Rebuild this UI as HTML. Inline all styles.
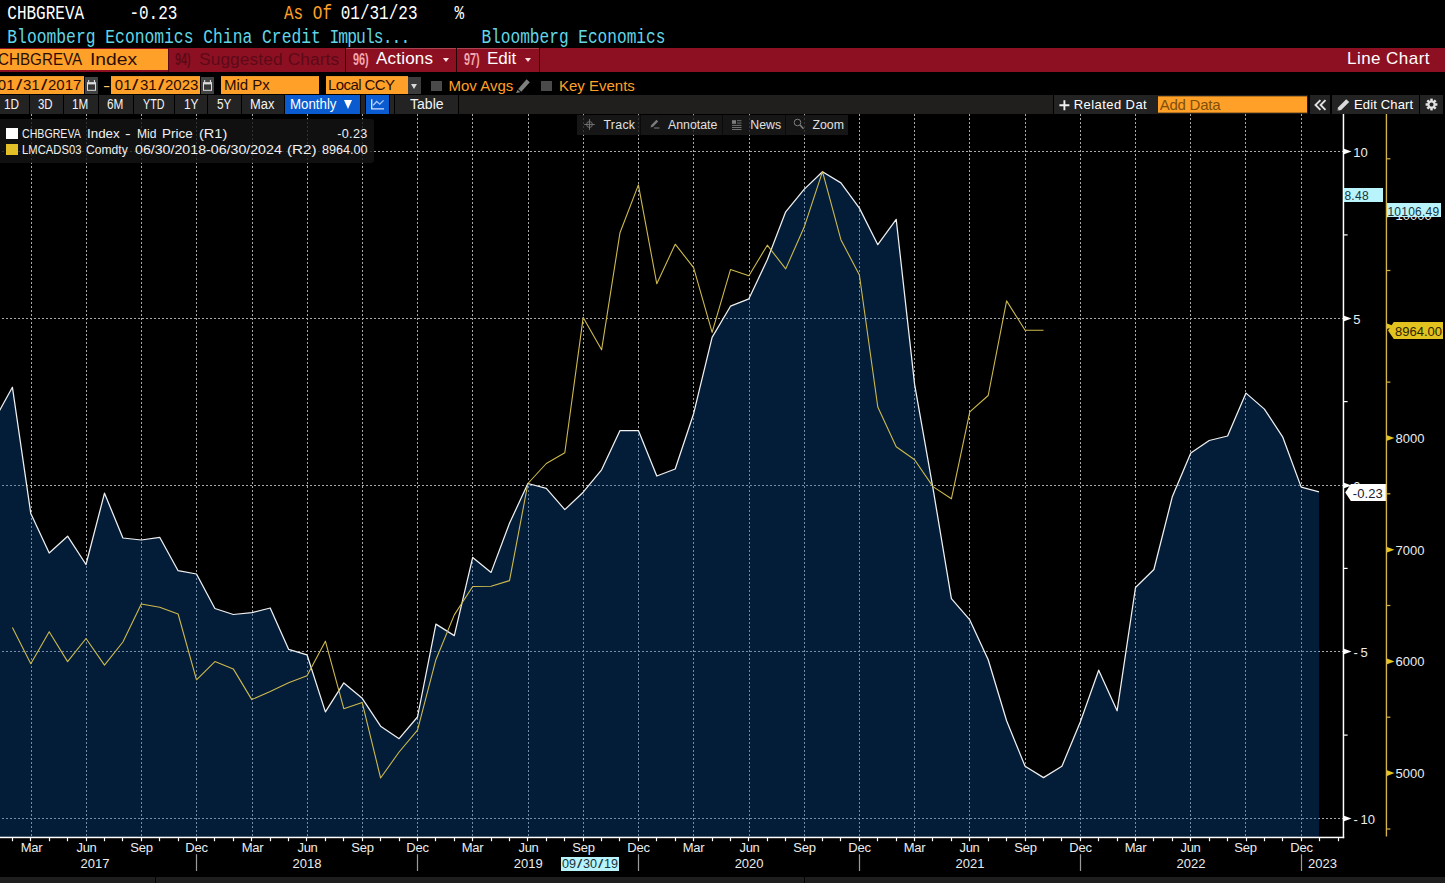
<!DOCTYPE html>
<html lang="en">
<head>
<meta charset="utf-8">
<title>CHBGREVA Index - Line Chart</title>
<style>
html,body{margin:0;padding:0;background:#000;}
body{width:1445px;height:883px;overflow:hidden;position:relative;font-family:"Liberation Sans","DejaVu Sans",sans-serif;color:#fff;}
.abs{position:absolute;white-space:nowrap;}
.mono{font-family:"Liberation Mono","DejaVu Sans Mono",monospace;font-size:16px;line-height:20px;transform-origin:0 0;transform:scaleY(1.3);}
.m2{font-size:16.33px;transform:scaleY(1.2);}
.ax{font-family:"Liberation Sans","DejaVu Sans",sans-serif;font-size:13px;fill:#ececec;}
.w{color:#fff}.o{color:#ffa028}.c{color:#62d6e6}
#redbar{left:0;top:47.8px;width:1445px;height:23.9px;background:#8d1022;}
.r3{font-size:17px;line-height:22px;top:48.2px;height:22px;}
.num{display:inline-block;transform-origin:0 50%;transform:scaleX(0.66);font-size:16.5px;margin-top:-0.3px;font-weight:bold}
.r4{font-size:15px;line-height:17px;top:77.3px;height:17px;}
.ob{top:76.2px;height:17.9px;line-height:18.6px;background:#ffa028;color:#2a0d06;box-shadow:inset 0 1px 0 #e8952a;}
.dt{font-size:15px}.dt i{font-style:normal;display:inline-block;width:8.4px;text-align:center;transform:scaleX(1.5)}
.dt2 i{font-style:normal;display:inline-block;width:7px;text-align:center;transform:scaleX(1.5)}
.tb{top:95px;height:19px;background:#232324;font-size:14px;line-height:19px;color:#f4f4f4;}
.tb span.sx{display:inline-block;transform-origin:0 0;}
.lw{font-size:12.6px;line-height:15px;color:#f0f0f0;transform-origin:0 0;}
.sep{top:95px;height:19px;width:1.2px;background:#000;}
</style>
</head>
<body>
<!-- Row 1 -->
<div class="abs mono w" id="t_sec" style="top:0.95px;left:7.3px">CHBGREVA</div>
<div class="abs mono w" id="t_val" style="top:0.95px;left:129.4px">-0.23</div>
<div class="abs mono o" id="t_asof" style="top:0.95px;left:284px">As Of</div>
<div class="abs mono w" id="t_date" style="top:0.95px;left:340.7px">01/31/23</div>
<div class="abs mono w" id="t_pct" style="top:0.95px;left:454.6px">%</div>
<!-- Row 2 -->
<div class="abs mono m2 c" id="t_desc" style="left:7.3px;top:26.1px">Bloomberg Economics China Credit <span style="letter-spacing:-0.93px;margin-left:-1.2px">Impuls...</span></div>
<div class="abs mono m2 c" id="t_src" style="left:481.4px;top:26.1px;font-size:16.15px">Bloomberg Economics</div>
<!-- Row 3 red bar -->
<div class="abs" id="redbar"></div>
<div class="abs r3" id="b_idx" style="left:0;top:49px;width:168px;background:#ffa028;color:#2a0d06;height:21px;line-height:21px;overflow:hidden"><span id="s_idx" style="position:absolute;left:-1.9px;top:0;transform-origin:0 0;transform:scaleX(0.895)">CHBGREVA</span><span id="s_idx2" style="position:absolute;left:89.9px;top:0;transform-origin:0 0;transform:scaleX(1.13)">Index</span></div>
<div class="abs r3" id="b_sug" style="left:169px;width:176px;color:#5c0a18"><span class="abs num" id="s_94" style="left:6.4px">94)</span><span class="abs" id="s_sug" style="left:30px;font-size:17.3px;letter-spacing:0.12px">Suggested Charts</span></div>
<div class="abs" style="left:168px;top:47.8px;width:1px;height:23.9px;background:#5a0914"></div>
<div class="abs" style="left:345px;top:47.8px;width:1.3px;height:23.9px;background:#240308"></div>
<div class="abs r3" id="b_act" style="left:346px;width:110px"><span class="abs num" id="s_96" style="left:7.2px;color:#f3a6ae">96)</span><span class="abs" id="s_act" style="left:30px;color:#fff;letter-spacing:0.2px">Actions</span><span class="abs tri" style="left:97.3px;top:9.9px;width:0;height:0;border-left:3.1px solid transparent;border-right:3.1px solid transparent;border-top:4.5px solid #ffe2e2"></span></div>
<div class="abs" style="left:456px;top:47.8px;width:1.3px;height:23.9px;background:#240308"></div>
<div class="abs r3" id="b_edit" style="left:457px;width:82px"><span class="abs num" id="s_97" style="left:7px;color:#f3a6ae">97)</span><span class="abs" id="s_edit" style="left:30px;color:#fff">Edit</span><span class="abs tri" style="left:68px;top:9.9px;width:0;height:0;border-left:3.1px solid transparent;border-right:3.1px solid transparent;border-top:4.5px solid #ffe2e2"></span></div>
<div class="abs" style="left:539px;top:47.8px;width:1.3px;height:23.9px;background:#240308"></div>
<div class="abs" style="left:346.3px;top:47.9px;width:109.7px;height:1px;background:rgba(255,200,200,0.28)"></div><div class="abs" style="left:457.3px;top:47.9px;width:81.7px;height:1px;background:rgba(255,200,200,0.28)"></div>
<div class="abs r3" id="s_lc" style="left:1347px;color:#fff;letter-spacing:0.45px">Line Chart</div>
<!-- Row 4 -->
<div class="abs r4 ob" id="f_d1" style="left:0;width:84px;background:#ffa028;color:#2a0d06;overflow:hidden"><span class="abs dt" id="s_d1" style="left:-2.2px">01<i>/</i>31<i>/</i>2017</span></div>
<div class="abs cal" style="left:85px;top:77px;width:13px;height:17.1px;background:#424444"><svg width="13" height="17" viewBox="0 0 13 17"><rect x="2.5" y="5.9" width="8" height="7.4" fill="#353535" stroke="#dcdcdc" stroke-width="1"/><rect x="2" y="5.3" width="9" height="2.1" fill="#dcdcdc"/><rect x="3.1" y="3" width="1.1" height="2.6" fill="#dcdcdc"/><rect x="8.9" y="3" width="1.1" height="2.6" fill="#dcdcdc"/></svg></div>
<div class="abs r4 o" style="left:102.5px;transform-origin:0 0;transform:scaleX(1.45);color:#ffc470">-</div>
<div class="abs r4 ob" id="f_d2" style="left:111px;width:89px;background:#ffa028;color:#2a0d06;overflow:hidden"><span class="abs dt" id="s_d2" style="left:3.8px">01<i>/</i>31<i>/</i>2023</span></div>
<div class="abs cal" style="left:201px;top:77px;width:13px;height:17.1px;background:#424444"><svg width="13" height="17" viewBox="0 0 13 17"><rect x="2.5" y="5.9" width="8" height="7.4" fill="#353535" stroke="#dcdcdc" stroke-width="1"/><rect x="2" y="5.3" width="9" height="2.1" fill="#dcdcdc"/><rect x="3.1" y="3" width="1.1" height="2.6" fill="#dcdcdc"/><rect x="8.9" y="3" width="1.1" height="2.6" fill="#dcdcdc"/></svg></div>
<div class="abs r4 ob" id="f_mid" style="left:221px;width:98px;background:#ffa028;color:#2a0d06"><span class="abs" id="s_mid" style="left:3px">Mid Px</span></div>
<div class="abs r4 ob" id="f_ccy" style="left:325.5px;width:82.5px;background:#ffa028;color:#2a0d06"><span class="abs" id="s_ccy" style="left:2.5px;letter-spacing:-0.6px">Local CCY</span></div>
<div class="abs" style="left:408px;top:77px;width:13px;height:17px;background:#3c3c3c"><span class="abs" style="left:3px;top:6.5px;width:0;height:0;border-left:3.5px solid transparent;border-right:3.5px solid transparent;border-top:5.5px solid #d8d8d8"></span></div>
<div class="abs" style="left:431px;top:80.5px;width:11px;height:10.5px;background:#4a4a4a"></div>
<div class="abs r4 o" id="s_mov" style="left:448.5px">Mov Avgs</div>
<svg class="abs" style="left:515px;top:78px" width="16" height="16" viewBox="0 0 16 16"><path d="M3.2,11.0 L11.6,1.3 L14.8,4.2 L6.3,13.8 Z" fill="#7f7f7f"/><path d="M1,15 L2.6,11.7 L5.4,14.2 Z" fill="#7f7f7f"/></svg>
<div class="abs" style="left:541.3px;top:80.5px;width:10.5px;height:10.5px;background:#4a4a4a"></div>
<div class="abs r4 o" id="s_key" style="left:559px">Key Events</div>
<!-- Row 5 toolbar -->
<div class="abs" style="left:0;top:95px;width:1445px;height:19px;background:#201f1e"></div>
<div class="abs tb" style="left:0;width:29px"><span class="abs sx" id="s_1d" style="left:3.96px;transform:scaleX(0.841)">1D</span></div>
<div class="abs tb" style="left:30px;width:33px"><span class="abs sx" id="s_3d" style="left:8.30px;transform:scaleX(0.817)">3D</span></div>
<div class="abs tb" style="left:64px;width:34px"><span class="abs sx" id="s_1m" style="left:8.17px;transform:scaleX(0.833)">1M</span></div>
<div class="abs tb" style="left:99px;width:34px"><span class="abs sx" id="s_6m" style="left:8.00px;transform:scaleX(0.842)">6M</span></div>
<div class="abs tb" style="left:134px;width:40px"><span class="abs sx" id="s_ytd" style="left:9.20px;transform:scaleX(0.764)">YTD</span></div>
<div class="abs tb" style="left:175px;width:32px"><span class="abs sx" id="s_1y" style="left:8.55px;transform:scaleX(0.850)">1Y</span></div>
<div class="abs tb" style="left:208px;width:33px"><span class="abs sx" id="s_5y" style="left:8.76px;transform:scaleX(0.838)">5Y</span></div>
<div class="abs tb" style="left:242px;width:42px"><span class="abs sx" id="s_max" style="left:8.08px;transform:scaleX(0.920)">Max</span></div>
<div class="abs tb" style="left:285px;width:75px;background:#0a5bd0;color:#fff"><span class="abs sx" id="s_mon" style="left:4.55px;transform:scaleX(0.948)">Monthly</span><span class="abs" style="left:59px;top:5px;width:0;height:0;border-left:4.6px solid transparent;border-right:4.6px solid transparent;border-top:9.2px solid #fff"></span></div>
<div class="abs tb" style="left:366px;width:23px;background:#0a5bd0"><svg width="23" height="19" viewBox="0 0 23 19" style="position:absolute;left:0;top:0"><path d="M5.7,4.3 V13.9 H18" fill="none" stroke="#cfe0ff" stroke-width="1.4"/><path d="M7.2,10.3 L10.7,6.5 L13.8,9.2 L17.6,5.4" fill="none" stroke="#a9c9ff" stroke-width="1.3"/></svg></div>
<div class="abs tb" style="left:395.2px;width:63px"><span class="abs sx" id="s_tab" style="left:15.2px;transform:scaleX(1.003)">Table</span></div>
<div class="abs tb" style="left:1054px;width:93px;overflow:hidden;color:#fff"><svg class="abs" style="left:4.5px;top:4.6px" width="11" height="11" viewBox="0 0 11 11"><path d="M5.4,0.3 V10.3 M0.4,5.3 H10.4" stroke="#f0f0f0" stroke-width="1.9" fill="none"/></svg><span class="abs" id="s_rel" style="left:19.8px;font-size:13px;letter-spacing:0.42px">Related Data</span></div>
<div class="abs" style="left:1147px;top:95px;width:11px;height:18.5px;background:#222"></div>
<div class="abs" id="f_add" style="left:1158px;top:95.5px;width:149px;height:17.4px;background:#ffa028;box-shadow:inset 0 1px 0 #b8741c, inset 0 -1px 0 #b8741c;color:#80500a;font-size:15px;line-height:17.4px"><span class="abs" id="s_add" style="left:1.7px;top:0px;letter-spacing:-0.25px">Add Data</span></div>
<div class="abs tb" style="left:1310px;width:20.4px"><svg class="abs" style="left:0;top:0" width="20" height="18" viewBox="0 0 20 18"><path d="M10.4,5.1 L5.5,10 L10.4,14.9 M15.5,5.1 L10.6,10 L15.5,14.9" fill="none" stroke="#e2e2e2" stroke-width="1.9" stroke-linejoin="miter"/></svg></div>
<div class="abs tb" style="left:1332px;width:87px;color:#fff"><svg class="abs" style="left:4px;top:2.5px" width="15" height="14" viewBox="0 0 15 14"><path d="M0.9,13 L2.3,9.3 L10.2,1.2 L13.2,4.0 L5.2,12.0 Z" fill="#dadada"/><path d="M0.9,13 L1.7,10.9 L3.2,12.3 Z" fill="#222"/></svg><span class="abs" id="s_ec" style="left:21.9px;font-size:13px;letter-spacing:0.17px">Edit Chart</span></div>
<div class="abs tb" style="left:1420px;width:23px"><svg class="abs" style="left:4.5px;top:3px" width="13" height="13" viewBox="-6.5 -6.5 13 13"><g fill="#e2e2e2"><rect x="-1.25" y="-5.9" width="2.5" height="3" transform="rotate(0)"/><rect x="-1.25" y="-5.9" width="2.5" height="3" transform="rotate(45)"/><rect x="-1.25" y="-5.9" width="2.5" height="3" transform="rotate(90)"/><rect x="-1.25" y="-5.9" width="2.5" height="3" transform="rotate(135)"/><rect x="-1.25" y="-5.9" width="2.5" height="3" transform="rotate(180)"/><rect x="-1.25" y="-5.9" width="2.5" height="3" transform="rotate(225)"/><rect x="-1.25" y="-5.9" width="2.5" height="3" transform="rotate(270)"/><rect x="-1.25" y="-5.9" width="2.5" height="3" transform="rotate(315)"/></g><circle r="3.05" fill="none" stroke="#e2e2e2" stroke-width="2.1"/></svg></div>
<div class="abs sep" style="left:28.5px"></div><div class="abs sep" style="left:62.5px"></div><div class="abs sep" style="left:97.5px"></div><div class="abs sep" style="left:132.5px"></div><div class="abs sep" style="left:173.5px"></div><div class="abs sep" style="left:206.5px"></div><div class="abs sep" style="left:240.5px"></div><div class="abs sep" style="left:283.5px"></div><div class="abs sep" style="left:360px;width:3.5px;background:#252523;border-left:1.5px solid #000;border-right:1px solid #000"></div><div class="abs sep" style="left:389px;width:4px;background:#252523;border-left:1px solid #000;border-right:1.2px solid #000"></div><div class="abs sep" style="left:458px"></div><div class="abs sep" style="left:1053px"></div><div class="abs sep" style="left:1308px;width:2px"></div><div class="abs sep" style="left:1330px;width:2px"></div><div class="abs sep" style="left:1419px"></div><div class="abs sep" style="left:1443px;width:2px"></div>
<svg id="chart" width="1445" height="883" viewBox="0 0 1445 883" style="position:absolute;left:0;top:0">
<defs><clipPath id="cp"><rect x="0" y="114" width="1343" height="724"/></clipPath></defs>
<g clip-path="url(#cp)">
<g stroke="#a9a9a9" stroke-width="1" stroke-dasharray="2 2" shape-rendering="crispEdges"><line x1="31.5" y1="114" x2="31.5" y2="837"/><line x1="86.5" y1="114" x2="86.5" y2="837"/><line x1="141.5" y1="114" x2="141.5" y2="837"/><line x1="196.5" y1="114" x2="196.5" y2="837"/><line x1="252.5" y1="114" x2="252.5" y2="837"/><line x1="307.5" y1="114" x2="307.5" y2="837"/><line x1="362.5" y1="114" x2="362.5" y2="837"/><line x1="417.5" y1="114" x2="417.5" y2="837"/><line x1="472.5" y1="114" x2="472.5" y2="837"/><line x1="528.5" y1="114" x2="528.5" y2="837"/><line x1="583.5" y1="114" x2="583.5" y2="837"/><line x1="638.5" y1="114" x2="638.5" y2="837"/><line x1="693.5" y1="114" x2="693.5" y2="837"/><line x1="749.5" y1="114" x2="749.5" y2="837"/><line x1="804.5" y1="114" x2="804.5" y2="837"/><line x1="859.5" y1="114" x2="859.5" y2="837"/><line x1="914.5" y1="114" x2="914.5" y2="837"/><line x1="969.5" y1="114" x2="969.5" y2="837"/><line x1="1025.5" y1="114" x2="1025.5" y2="837"/><line x1="1080.5" y1="114" x2="1080.5" y2="837"/><line x1="1135.5" y1="114" x2="1135.5" y2="837"/><line x1="1190.5" y1="114" x2="1190.5" y2="837"/><line x1="1245.5" y1="114" x2="1245.5" y2="837"/><line x1="1301.5" y1="114" x2="1301.5" y2="837"/><line x1="-2" y1="151.5" x2="1343" y2="151.5"/><line x1="-2" y1="318.5" x2="1343" y2="318.5"/><line x1="-2" y1="485.5" x2="1343" y2="485.5"/><line x1="-2" y1="651.5" x2="1343" y2="651.5"/><line x1="-2" y1="818.5" x2="1343" y2="818.5"/></g>
<path d="M-6.0,420.6 L12.4,387.2 L30.8,513.6 L49.2,553.0 L67.6,536.2 L86.0,564.5 L104.5,493.2 L122.9,538.0 L141.3,540.0 L159.7,537.3 L178.1,570.7 L196.5,574.0 L214.9,608.5 L233.3,614.5 L251.8,612.6 L270.2,608.0 L288.6,649.3 L307.0,654.8 L325.4,711.9 L343.8,682.9 L362.2,698.3 L380.6,726.2 L399.1,738.7 L417.5,717.0 L435.9,624.1 L454.3,635.6 L472.7,557.4 L491.1,572.4 L509.5,523.3 L527.9,483.5 L546.3,488.4 L564.8,509.6 L583.2,492.2 L601.6,469.8 L620.0,430.6 L638.4,430.6 L656.8,476.0 L675.2,469.0 L693.6,413.7 L712.1,337.4 L730.5,306.2 L748.9,298.8 L767.3,259.7 L785.7,211.8 L804.1,189.4 L822.5,171.7 L840.9,182.9 L859.4,208.1 L877.8,244.7 L896.2,219.3 L914.6,384.4 L933.0,488.4 L951.4,598.7 L969.8,619.9 L988.2,659.7 L1006.6,720.8 L1025.1,766.3 L1043.5,777.6 L1061.9,766.3 L1080.3,722.0 L1098.7,670.2 L1117.1,710.8 L1135.5,587.5 L1153.9,569.5 L1172.4,496.4 L1190.8,453.0 L1209.2,440.5 L1227.6,436.0 L1246.0,393.1 L1264.4,409.1 L1282.8,437.2 L1301.2,487.1 L1319.0,491.8 L1319.0,837.0 L-6.0,837.0 Z" fill="rgb(9,88,170)" fill-opacity="0.33"/>
<path d="M-6.0,420.6 L12.4,387.2 L30.8,513.6 L49.2,553.0 L67.6,536.2 L86.0,564.5 L104.5,493.2 L122.9,538.0 L141.3,540.0 L159.7,537.3 L178.1,570.7 L196.5,574.0 L214.9,608.5 L233.3,614.5 L251.8,612.6 L270.2,608.0 L288.6,649.3 L307.0,654.8 L325.4,711.9 L343.8,682.9 L362.2,698.3 L380.6,726.2 L399.1,738.7 L417.5,717.0 L435.9,624.1 L454.3,635.6 L472.7,557.4 L491.1,572.4 L509.5,523.3 L527.9,483.5 L546.3,488.4 L564.8,509.6 L583.2,492.2 L601.6,469.8 L620.0,430.6 L638.4,430.6 L656.8,476.0 L675.2,469.0 L693.6,413.7 L712.1,337.4 L730.5,306.2 L748.9,298.8 L767.3,259.7 L785.7,211.8 L804.1,189.4 L822.5,171.7 L840.9,182.9 L859.4,208.1 L877.8,244.7 L896.2,219.3 L914.6,384.4 L933.0,488.4 L951.4,598.7 L969.8,619.9 L988.2,659.7 L1006.6,720.8 L1025.1,766.3 L1043.5,777.6 L1061.9,766.3 L1080.3,722.0 L1098.7,670.2 L1117.1,710.8 L1135.5,587.5 L1153.9,569.5 L1172.4,496.4 L1190.8,453.0 L1209.2,440.5 L1227.6,436.0 L1246.0,393.1 L1264.4,409.1 L1282.8,437.2 L1301.2,487.1 L1319.0,491.8" fill="none" stroke="#f0f0f0" stroke-width="1.25" stroke-linejoin="round"/>
<path d="M12.4,627.6 L30.8,663.7 L49.2,631.7 L67.6,661.6 L86.0,638.5 L104.5,665.1 L122.9,642.0 L141.3,604.0 L159.7,607.2 L178.1,614.0 L196.5,679.8 L214.9,661.6 L233.3,668.9 L251.8,699.6 L270.2,691.5 L288.6,682.8 L307.0,675.7 L325.4,641.2 L343.8,708.7 L362.2,702.6 L380.6,778.0 L399.1,752.0 L417.5,730.2 L435.9,659.7 L454.3,614.9 L472.7,586.5 L491.1,586.3 L509.5,580.6 L527.9,483.5 L546.3,463.5 L564.8,452.8 L583.2,317.4 L601.6,349.8 L620.0,232.7 L638.4,184.9 L656.8,283.8 L675.2,244.2 L693.6,267.6 L712.1,332.4 L730.5,269.6 L748.9,275.8 L767.3,245.2 L785.7,268.9 L804.1,227.3 L822.5,171.7 L840.9,239.7 L859.4,275.0 L877.8,407.0 L896.2,446.8 L914.6,459.7 L933.0,486.6 L951.4,498.8 L969.8,411.9 L988.2,395.5 L1006.6,300.9 L1025.1,330.3 L1043.5,330.3" fill="none" stroke="#cdb94e" stroke-width="1.1" stroke-linejoin="round"/>
</g>
<g shape-rendering="crispEdges">
<rect x="1342.7" y="114" width="1.5" height="724.2" fill="#fff" shape-rendering="auto"/>
<rect x="0" y="836.7" width="1344.2" height="1.5" fill="#fff" shape-rendering="auto"/>
<rect x="1385.75" y="114" width="1.35" height="722.5" fill="#d6b44c" shape-rendering="auto"/>
</g>
<rect x="1344" y="234.3" width="3.6" height="1.2" fill="#fff"/>
<rect x="1344" y="401.0" width="3.6" height="1.2" fill="#fff"/>
<rect x="1344" y="567.8" width="3.6" height="1.2" fill="#fff"/>
<rect x="1344" y="734.5" width="3.6" height="1.2" fill="#fff"/>
<path d="M1344,148.7 L1351.6,151.5 L1344,154.3 Z" fill="#fff"/>
<text x="1353.2" y="156.5" class="ax">10</text>
<path d="M1344,315.7 L1351.6,318.5 L1344,321.3 Z" fill="#fff"/>
<text x="1353.2" y="323.5" class="ax">5</text>
<path d="M1344,482.7 L1351.6,485.5 L1344,488.3 Z" fill="#fff"/>
<text x="1353.2" y="490.5" class="ax">0</text>
<path d="M1344,648.7 L1351.6,651.5 L1344,654.3 Z" fill="#fff"/>
<text x="1353.6" y="656.5" class="ax">-<tspan dx="2.6">5</tspan></text>
<path d="M1344,815.7 L1351.6,818.5 L1344,821.3 Z" fill="#fff"/>
<text x="1353.6" y="823.5" class="ax">-<tspan dx="2.6">10</tspan></text>
<rect x="1387" y="158.2" width="3.4" height="1.2" fill="#d6b44c"/>
<rect x="1387" y="269.9" width="3.4" height="1.2" fill="#d6b44c"/>
<rect x="1387" y="381.5" width="3.4" height="1.2" fill="#d6b44c"/>
<rect x="1387" y="493.2" width="3.4" height="1.2" fill="#d6b44c"/>
<rect x="1387" y="604.9" width="3.4" height="1.2" fill="#d6b44c"/>
<rect x="1387" y="716.6" width="3.4" height="1.2" fill="#d6b44c"/>
<rect x="1387" y="828.4" width="3.4" height="1.2" fill="#d6b44c"/>
<path d="M1387,211.8 L1394.5,214.6 L1387,217.4 Z" fill="#e6c51f"/>
<text x="1395.6" y="219.6" class="ax">10000</text>
<path d="M1387,323.5 L1394.5,326.3 L1387,329.1 Z" fill="#e6c51f"/>
<text x="1395.6" y="331.3" class="ax">9000</text>
<path d="M1387,435.2 L1394.5,438.0 L1387,440.8 Z" fill="#e6c51f"/>
<text x="1395.6" y="443.0" class="ax">8000</text>
<path d="M1387,546.9 L1394.5,549.7 L1387,552.5 Z" fill="#e6c51f"/>
<text x="1395.6" y="554.7" class="ax">7000</text>
<path d="M1387,658.6 L1394.5,661.4 L1387,664.2 Z" fill="#e6c51f"/>
<text x="1395.6" y="666.4" class="ax">6000</text>
<path d="M1387,770.3 L1394.5,773.1 L1387,775.9 Z" fill="#e6c51f"/>
<text x="1395.6" y="778.1" class="ax">5000</text>
<rect x="11.9" y="838" width="1.2" height="3.2" fill="#fff"/>
<rect x="29.9" y="838" width="1.2" height="3.2" fill="#fff"/>
<rect x="48.9" y="838" width="1.2" height="3.2" fill="#fff"/>
<rect x="66.9" y="838" width="1.2" height="3.2" fill="#fff"/>
<rect x="85.9" y="838" width="1.2" height="3.2" fill="#fff"/>
<rect x="103.9" y="838" width="1.2" height="3.2" fill="#fff"/>
<rect x="121.9" y="838" width="1.2" height="3.2" fill="#fff"/>
<rect x="140.9" y="838" width="1.2" height="3.2" fill="#fff"/>
<rect x="158.9" y="838" width="1.2" height="3.2" fill="#fff"/>
<rect x="177.9" y="838" width="1.2" height="3.2" fill="#fff"/>
<rect x="195.9" y="838" width="1.2" height="3.2" fill="#fff"/>
<rect x="213.9" y="838" width="1.2" height="3.2" fill="#fff"/>
<rect x="232.9" y="838" width="1.2" height="3.2" fill="#fff"/>
<rect x="250.9" y="838" width="1.2" height="3.2" fill="#fff"/>
<rect x="269.9" y="838" width="1.2" height="3.2" fill="#fff"/>
<rect x="287.9" y="838" width="1.2" height="3.2" fill="#fff"/>
<rect x="305.9" y="838" width="1.2" height="3.2" fill="#fff"/>
<rect x="324.9" y="838" width="1.2" height="3.2" fill="#fff"/>
<rect x="342.9" y="838" width="1.2" height="3.2" fill="#fff"/>
<rect x="361.9" y="838" width="1.2" height="3.2" fill="#fff"/>
<rect x="379.9" y="838" width="1.2" height="3.2" fill="#fff"/>
<rect x="398.9" y="838" width="1.2" height="3.2" fill="#fff"/>
<rect x="416.9" y="838" width="1.2" height="3.2" fill="#fff"/>
<rect x="434.9" y="838" width="1.2" height="3.2" fill="#fff"/>
<rect x="453.9" y="838" width="1.2" height="3.2" fill="#fff"/>
<rect x="471.9" y="838" width="1.2" height="3.2" fill="#fff"/>
<rect x="490.9" y="838" width="1.2" height="3.2" fill="#fff"/>
<rect x="508.9" y="838" width="1.2" height="3.2" fill="#fff"/>
<rect x="526.9" y="838" width="1.2" height="3.2" fill="#fff"/>
<rect x="545.9" y="838" width="1.2" height="3.2" fill="#fff"/>
<rect x="563.9" y="838" width="1.2" height="3.2" fill="#fff"/>
<rect x="582.9" y="838" width="1.2" height="3.2" fill="#fff"/>
<rect x="600.9" y="838" width="1.2" height="3.2" fill="#fff"/>
<rect x="618.9" y="838" width="1.2" height="3.2" fill="#fff"/>
<rect x="637.9" y="838" width="1.2" height="3.2" fill="#fff"/>
<rect x="655.9" y="838" width="1.2" height="3.2" fill="#fff"/>
<rect x="674.9" y="838" width="1.2" height="3.2" fill="#fff"/>
<rect x="692.9" y="838" width="1.2" height="3.2" fill="#fff"/>
<rect x="711.9" y="838" width="1.2" height="3.2" fill="#fff"/>
<rect x="729.9" y="838" width="1.2" height="3.2" fill="#fff"/>
<rect x="747.9" y="838" width="1.2" height="3.2" fill="#fff"/>
<rect x="766.9" y="838" width="1.2" height="3.2" fill="#fff"/>
<rect x="784.9" y="838" width="1.2" height="3.2" fill="#fff"/>
<rect x="803.9" y="838" width="1.2" height="3.2" fill="#fff"/>
<rect x="821.9" y="838" width="1.2" height="3.2" fill="#fff"/>
<rect x="839.9" y="838" width="1.2" height="3.2" fill="#fff"/>
<rect x="858.9" y="838" width="1.2" height="3.2" fill="#fff"/>
<rect x="876.9" y="838" width="1.2" height="3.2" fill="#fff"/>
<rect x="895.9" y="838" width="1.2" height="3.2" fill="#fff"/>
<rect x="913.9" y="838" width="1.2" height="3.2" fill="#fff"/>
<rect x="931.9" y="838" width="1.2" height="3.2" fill="#fff"/>
<rect x="950.9" y="838" width="1.2" height="3.2" fill="#fff"/>
<rect x="968.9" y="838" width="1.2" height="3.2" fill="#fff"/>
<rect x="987.9" y="838" width="1.2" height="3.2" fill="#fff"/>
<rect x="1005.9" y="838" width="1.2" height="3.2" fill="#fff"/>
<rect x="1024.9" y="838" width="1.2" height="3.2" fill="#fff"/>
<rect x="1042.9" y="838" width="1.2" height="3.2" fill="#fff"/>
<rect x="1060.9" y="838" width="1.2" height="3.2" fill="#fff"/>
<rect x="1079.9" y="838" width="1.2" height="3.2" fill="#fff"/>
<rect x="1097.9" y="838" width="1.2" height="3.2" fill="#fff"/>
<rect x="1116.9" y="838" width="1.2" height="3.2" fill="#fff"/>
<rect x="1134.9" y="838" width="1.2" height="3.2" fill="#fff"/>
<rect x="1152.9" y="838" width="1.2" height="3.2" fill="#fff"/>
<rect x="1171.9" y="838" width="1.2" height="3.2" fill="#fff"/>
<rect x="1189.9" y="838" width="1.2" height="3.2" fill="#fff"/>
<rect x="1208.9" y="838" width="1.2" height="3.2" fill="#fff"/>
<rect x="1226.9" y="838" width="1.2" height="3.2" fill="#fff"/>
<rect x="1245.9" y="838" width="1.2" height="3.2" fill="#fff"/>
<rect x="1263.9" y="838" width="1.2" height="3.2" fill="#fff"/>
<rect x="1281.9" y="838" width="1.2" height="3.2" fill="#fff"/>
<rect x="1300.9" y="838" width="1.2" height="3.2" fill="#fff"/>
<rect x="1318.9" y="838" width="1.2" height="3.2" fill="#fff"/>
<rect x="1337.9" y="838" width="1.2" height="3.2" fill="#fff"/>
<text x="31.5" y="852" text-anchor="middle" class="ax" style="letter-spacing:-0.25px">Mar</text>
<text x="86.5" y="852" text-anchor="middle" class="ax" style="letter-spacing:-0.25px">Jun</text>
<text x="141.5" y="852" text-anchor="middle" class="ax" style="letter-spacing:-0.25px">Sep</text>
<text x="196.5" y="852" text-anchor="middle" class="ax" style="letter-spacing:-0.25px">Dec</text>
<text x="252.5" y="852" text-anchor="middle" class="ax" style="letter-spacing:-0.25px">Mar</text>
<text x="307.5" y="852" text-anchor="middle" class="ax" style="letter-spacing:-0.25px">Jun</text>
<text x="362.5" y="852" text-anchor="middle" class="ax" style="letter-spacing:-0.25px">Sep</text>
<text x="417.5" y="852" text-anchor="middle" class="ax" style="letter-spacing:-0.25px">Dec</text>
<text x="472.5" y="852" text-anchor="middle" class="ax" style="letter-spacing:-0.25px">Mar</text>
<text x="528.5" y="852" text-anchor="middle" class="ax" style="letter-spacing:-0.25px">Jun</text>
<text x="583.5" y="852" text-anchor="middle" class="ax" style="letter-spacing:-0.25px">Sep</text>
<text x="638.5" y="852" text-anchor="middle" class="ax" style="letter-spacing:-0.25px">Dec</text>
<text x="693.5" y="852" text-anchor="middle" class="ax" style="letter-spacing:-0.25px">Mar</text>
<text x="749.5" y="852" text-anchor="middle" class="ax" style="letter-spacing:-0.25px">Jun</text>
<text x="804.5" y="852" text-anchor="middle" class="ax" style="letter-spacing:-0.25px">Sep</text>
<text x="859.5" y="852" text-anchor="middle" class="ax" style="letter-spacing:-0.25px">Dec</text>
<text x="914.5" y="852" text-anchor="middle" class="ax" style="letter-spacing:-0.25px">Mar</text>
<text x="969.5" y="852" text-anchor="middle" class="ax" style="letter-spacing:-0.25px">Jun</text>
<text x="1025.5" y="852" text-anchor="middle" class="ax" style="letter-spacing:-0.25px">Sep</text>
<text x="1080.5" y="852" text-anchor="middle" class="ax" style="letter-spacing:-0.25px">Dec</text>
<text x="1135.5" y="852" text-anchor="middle" class="ax" style="letter-spacing:-0.25px">Mar</text>
<text x="1190.5" y="852" text-anchor="middle" class="ax" style="letter-spacing:-0.25px">Jun</text>
<text x="1245.5" y="852" text-anchor="middle" class="ax" style="letter-spacing:-0.25px">Sep</text>
<text x="1301.5" y="852" text-anchor="middle" class="ax" style="letter-spacing:-0.25px">Dec</text>
<text x="95" y="868" text-anchor="middle" class="ax">2017</text>
<text x="307" y="868" text-anchor="middle" class="ax">2018</text>
<text x="528.2" y="868" text-anchor="middle" class="ax">2019</text>
<text x="749.1" y="868" text-anchor="middle" class="ax">2020</text>
<text x="970" y="868" text-anchor="middle" class="ax">2021</text>
<text x="1191" y="868" text-anchor="middle" class="ax">2022</text>
<text x="1308" y="868" class="ax">2023</text>
<rect x="195.9" y="854.2" width="1.2" height="16.8" fill="#9a9a9a"/>
<rect x="416.9" y="854.2" width="1.2" height="16.8" fill="#9a9a9a"/>
<rect x="637.9" y="854.2" width="1.2" height="16.8" fill="#9a9a9a"/>
<rect x="858.9" y="854.2" width="1.2" height="16.8" fill="#9a9a9a"/>
<rect x="1079.9" y="854.2" width="1.2" height="16.8" fill="#9a9a9a"/>
<rect x="1300.9" y="854.2" width="1.2" height="16.8" fill="#9a9a9a"/>
</svg>
<!-- Legend -->
<div class="abs" id="legend" style="left:0;top:119px;width:374px;height:44.3px;border-radius:0 3px 3px 0;background:rgba(20,20,20,0.8)"></div>
<div class="abs" style="left:6px;top:127.5px;width:12px;height:11px;background:#fff"></div>
<div class="abs" style="left:6px;top:143.5px;width:12px;height:11px;background:#e3bf28"></div>
<div id="s_l1"><span class="abs lw" id="l1w0" style="left:22.40px;top:127.1px;transform:scaleX(0.843)">CHBGREVA</span><span class="abs lw" id="l1w1" style="left:86.64px;top:127.1px;transform:scaleX(1.063)">Index</span><span class="abs lw" id="l1w2" style="left:125.30px;top:127.1px;transform:scaleX(1.350)">-</span><span class="abs lw" id="l1w3" style="left:136.55px;top:127.1px;transform:scaleX(0.960)">Mid</span><span class="abs lw" id="l1w4" style="left:161.73px;top:127.1px;transform:scaleX(1.068)">Price</span><span class="abs lw" id="l1w5" style="left:199.05px;top:127.1px;transform:scaleX(1.152)">(R1)</span></div>
<div class="abs lg" id="s_l1v" style="right:1077.5px;top:127.1px;letter-spacing:0.3px;font-size:12.6px;line-height:15px;color:#f0f0f0">-0.23</div>
<div id="s_l2"><span class="abs lw" id="l2w0" style="left:21.50px;top:143.3px;transform:scaleX(0.895)">LMCADS03</span><span class="abs lw" id="l2w1" style="left:86.40px;top:143.3px;transform:scaleX(0.961)">Comdty</span><span class="abs lw" id="l2w2" style="left:134.90px;top:143.3px;transform:scaleX(1.127)">06/30/2018-06/30/2024</span><span class="abs lw" id="l2w3" style="left:286.50px;top:143.3px;transform:scaleX(1.204)">(R2)</span></div>
<div class="abs lg" id="s_l2v" style="right:1077.5px;top:143.3px;font-size:12.6px;line-height:15px;color:#f0f0f0">8964.00</div>
<!-- Chart tools -->
<div class="abs" id="ctools" style="left:577px;top:115px;width:271px;height:19.7px;background:rgba(27,27,27,0.8)"></div>
<div class="abs sep" style="left:640px;top:115px;height:19.5px;background:#0a0a0a"></div><div class="abs sep" style="left:722px;top:115px;height:19.5px;background:#0a0a0a"></div><div class="abs sep" style="left:784.5px;top:115px;height:19.5px;background:#0a0a0a"></div>
<svg class="abs" style="left:582px;top:116.7px" width="16" height="16" viewBox="0 0 16 16"><circle cx="7.5" cy="7.5" r="2.9" fill="none" stroke="#767676" stroke-width="0.9"/><path d="M7.5,2.1 V12.9 M2.2,7.5 H12.8" stroke="#767676" stroke-width="0.9" fill="none"/></svg>
<div class="abs ct" id="s_trk" style="left:603.5px;top:118px;letter-spacing:0.3px;font-size:12.3px;line-height:15px;color:#e0e0e0">Track</div>
<svg class="abs" style="left:649px;top:117px" width="12" height="14" viewBox="0 0 12 14"><path d="M1.5,10.5 L2.3,8 L7.5,2.8 L9.2,4.5 L4,9.7 Z" fill="#7c7c7c"/><rect x="5" y="10.5" width="5.5" height="1" fill="#7c7c7c"/></svg>
<div class="abs ct" id="s_ann" style="left:668px;top:118px;font-size:12.3px;line-height:15px;color:#e0e0e0">Annotate</div>
<svg class="abs" style="left:732px;top:120px" width="10" height="11" viewBox="0 0 10 11"><rect x="0" y="0.2" width="4" height="3.6" fill="#7c7c7c"/><rect x="5" y="0.3" width="4.5" height="0.9" fill="#7c7c7c"/><rect x="5" y="2.6" width="4.5" height="0.9" fill="#7c7c7c"/><rect x="0" y="4.9" width="9.5" height="0.9" fill="#7c7c7c"/><rect x="0" y="7.0" width="9.5" height="0.9" fill="#7c7c7c"/><rect x="0" y="9.1" width="9.5" height="0.9" fill="#7c7c7c"/></svg>
<div class="abs ct" id="s_nws" style="left:750.3px;top:118px;font-size:12.3px;line-height:15px;color:#e0e0e0">News</div>
<svg class="abs" style="left:793px;top:118px" width="12" height="13" viewBox="0 0 12 13"><circle cx="4.5" cy="4.5" r="3.3" fill="none" stroke="#7c7c7c" stroke-width="1"/><path d="M7,7 L10.5,10.8" stroke="#7c7c7c" stroke-width="1.6"/></svg>
<div class="abs ct" id="s_zm" style="left:812.5px;top:118px;font-size:12.3px;line-height:15px;color:#e0e0e0">Zoom</div>
<!-- Axis value tags -->
<div class="abs tag" id="tg_848" style="left:1344.1px;top:188px;width:39px;height:13.8px;background:#b9f3fb;color:#17333c;font-size:12px;line-height:13.8px"><span class="abs" style="left:0.3px;top:2px;letter-spacing:0.3px">8.48</span></div>
<div class="abs tag" id="tg_10106" style="left:1386.6px;top:203.1px;width:54.5px;height:13.9px;background:#b9f3fb;color:#17333c;font-size:12px;line-height:13.9px"><span class="abs" style="left:0.8px;top:2.5px;letter-spacing:0.25px">10106.49</span></div>
<svg class="abs" style="left:1387px;top:322px" width="57" height="17" viewBox="0 0 57 17"><path d="M1,8.5 L6.8,0 H56 V17 H6.8 Z" fill="#e2c21e"/></svg>
<div class="abs tag" id="tg_8964" style="left:1395px;top:323.2px;font-size:13px;line-height:17px;color:#2b2500">8964.00</div>
<svg class="abs" style="left:1345px;top:484px" width="42" height="17" viewBox="0 0 42 17"><path d="M0.2,8.4 L5.9,0 H40.9 V16.9 H5.9 Z" fill="#fff"/></svg>
<div class="abs tag" id="tg_023" style="left:1352.8px;top:485.2px;font-size:13px;letter-spacing:0.1px;line-height:17px;color:#1a2030">-0.23</div>
<div class="abs tag" id="tg_date" style="left:561px;top:857px;width:58.1px;height:13.9px;background:#b9f3fb;color:#17333c;font-size:12.6px;line-height:13.9px"><span class="abs dt2" style="left:1px;top:1.1px">09<i>/</i>30<i>/</i>19</span></div>
<!-- bottom bar -->
<div class="abs" style="left:0;top:876.8px;width:1445px;height:7px;background:#1e1e1e"></div>
<div class="abs" style="left:155px;top:876.5px;width:1px;height:7px;background:#000"></div>
<div class="abs" style="left:804px;top:876.5px;width:1px;height:7px;background:#000"></div>
</body>
</html>
